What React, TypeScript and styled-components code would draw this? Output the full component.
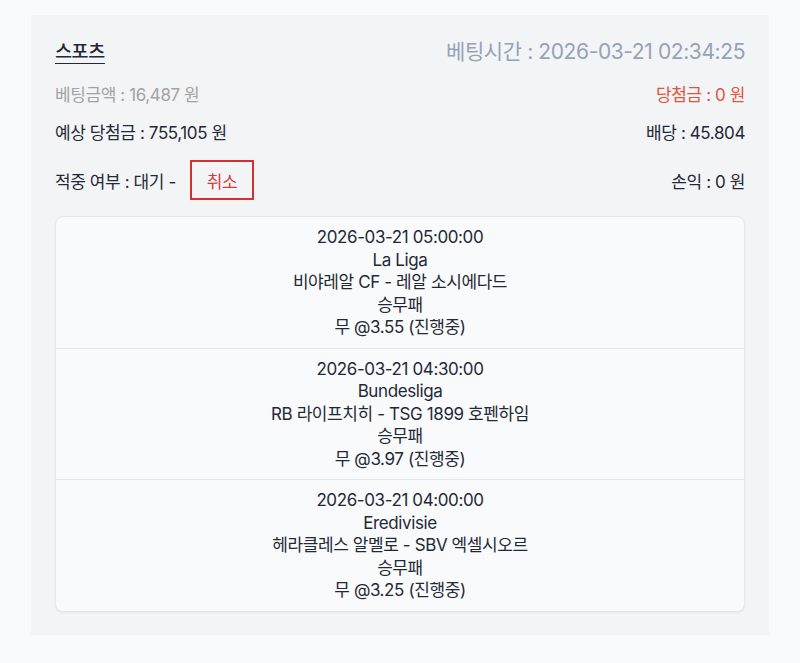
import React from "react";
import { styled, createGlobalStyle } from "styled-components";

const GlobalStyle = createGlobalStyle`
  html, body {
    margin: 0;
    padding: 0;
    background: #f9fafb;
  }
  body {
    font-family: Inter, "Noto Sans CJK KR", sans-serif;
    color: #1f2937;
  }
`;

const Page = styled.div`
  padding: 15px 31px 28px;
`;

const Panel = styled.section`
  background: #f3f4f6;
  padding: 20px 24px 23px;
  letter-spacing: -0.4px;
`;

const Row = styled.div<{ $mt?: number; $h?: number }>`
  display: flex;
  justify-content: space-between;
  align-items: center;
  height: ${(p) => p.$h ?? 24}px;
  margin-top: ${(p) => p.$mt ?? 0}px;
`;

const Title = styled.span`
  font-size: 18.5px;
  font-weight: 500;
  color: #1f2937;
  text-decoration: underline;
  text-underline-offset: 5px;
`;

const BetTime = styled.span`
  font-size: 21px;
  color: #94a3b8;
`;

const Text = styled.span<{ $tone?: "muted" | "red" | "normal" }>`
  font-size: 17px;
  color: ${(p) =>
    p.$tone === "muted" ? "#a3a3a3" : p.$tone === "red" ? "#e4533b" : "#1f2937"};
`;

const Status = styled.div`
  display: flex;
  align-items: center;
  gap: 14px;
`;

const CancelButton = styled.button`
  width: 64px;
  height: 40px;
  border: 2px solid #d62f2f;
  background: transparent;
  color: #d63a3a;
  font-family: inherit;
  font-size: 17px;
  letter-spacing: inherit;
  padding: 0;
  cursor: pointer;
`;

const Card = styled.div`
  margin-top: 16px;
  background: #f9fafb;
  border: 1px solid #e5e7eb;
  border-radius: 8px;
  box-shadow: 0 1px 2px rgba(0, 0, 0, 0.05);
  overflow: hidden;
`;

const Game = styled.div`
  padding: 9px 0 9px;
  text-align: center;
  font-size: 17px;
  line-height: 22.5px;
  color: #1f2937;

  & + & {
    border-top: 1px solid #e5e7eb;
  }
`;

const games = [
  {
    time: "2026-03-21 05:00:00",
    league: "La Liga",
    match: "비야레알 CF - 레알 소시에다드",
    market: "승무패",
    pick: "무 @3.55 (진행중)",
  },
  {
    time: "2026-03-21 04:30:00",
    league: "Bundesliga",
    match: "RB 라이프치히 - TSG 1899 호펜하임",
    market: "승무패",
    pick: "무 @3.97 (진행중)",
  },
  {
    time: "2026-03-21 04:00:00",
    league: "Eredivisie",
    match: "헤라클레스 알멜로 - SBV 엑셀시오르",
    market: "승무패",
    pick: "무 @3.25 (진행중)",
  },
];

export default function App() {
  return (
    <>
      <GlobalStyle />
      <Page>
        <Panel>
          <Row $h={30}>
            <Title>스포츠</Title>
            <BetTime>베팅시간 : 2026-03-21 02:34:25</BetTime>
          </Row>
          <Row $mt={16}>
            <Text $tone="muted">베팅금액 : 16,487 원</Text>
            <Text $tone="red">당첨금 : 0 원</Text>
          </Row>
          <Row $mt={14}>
            <Text>예상 당첨금 : 755,105 원</Text>
            <Text>배당 : 45.804</Text>
          </Row>
          <Row $mt={17} $h={40}>
            <Status>
              <Text>적중 여부 : 대기 -</Text>
              <CancelButton>취소</CancelButton>
            </Status>
            <Text>손익 : 0 원</Text>
          </Row>
          <Card>
            {games.map((g) => (
              <Game key={g.time}>
                <div>{g.time}</div>
                <div>{g.league}</div>
                <div>{g.match}</div>
                <div>{g.market}</div>
                <div>{g.pick}</div>
              </Game>
            ))}
          </Card>
        </Panel>
      </Page>
    </>
  );
}
